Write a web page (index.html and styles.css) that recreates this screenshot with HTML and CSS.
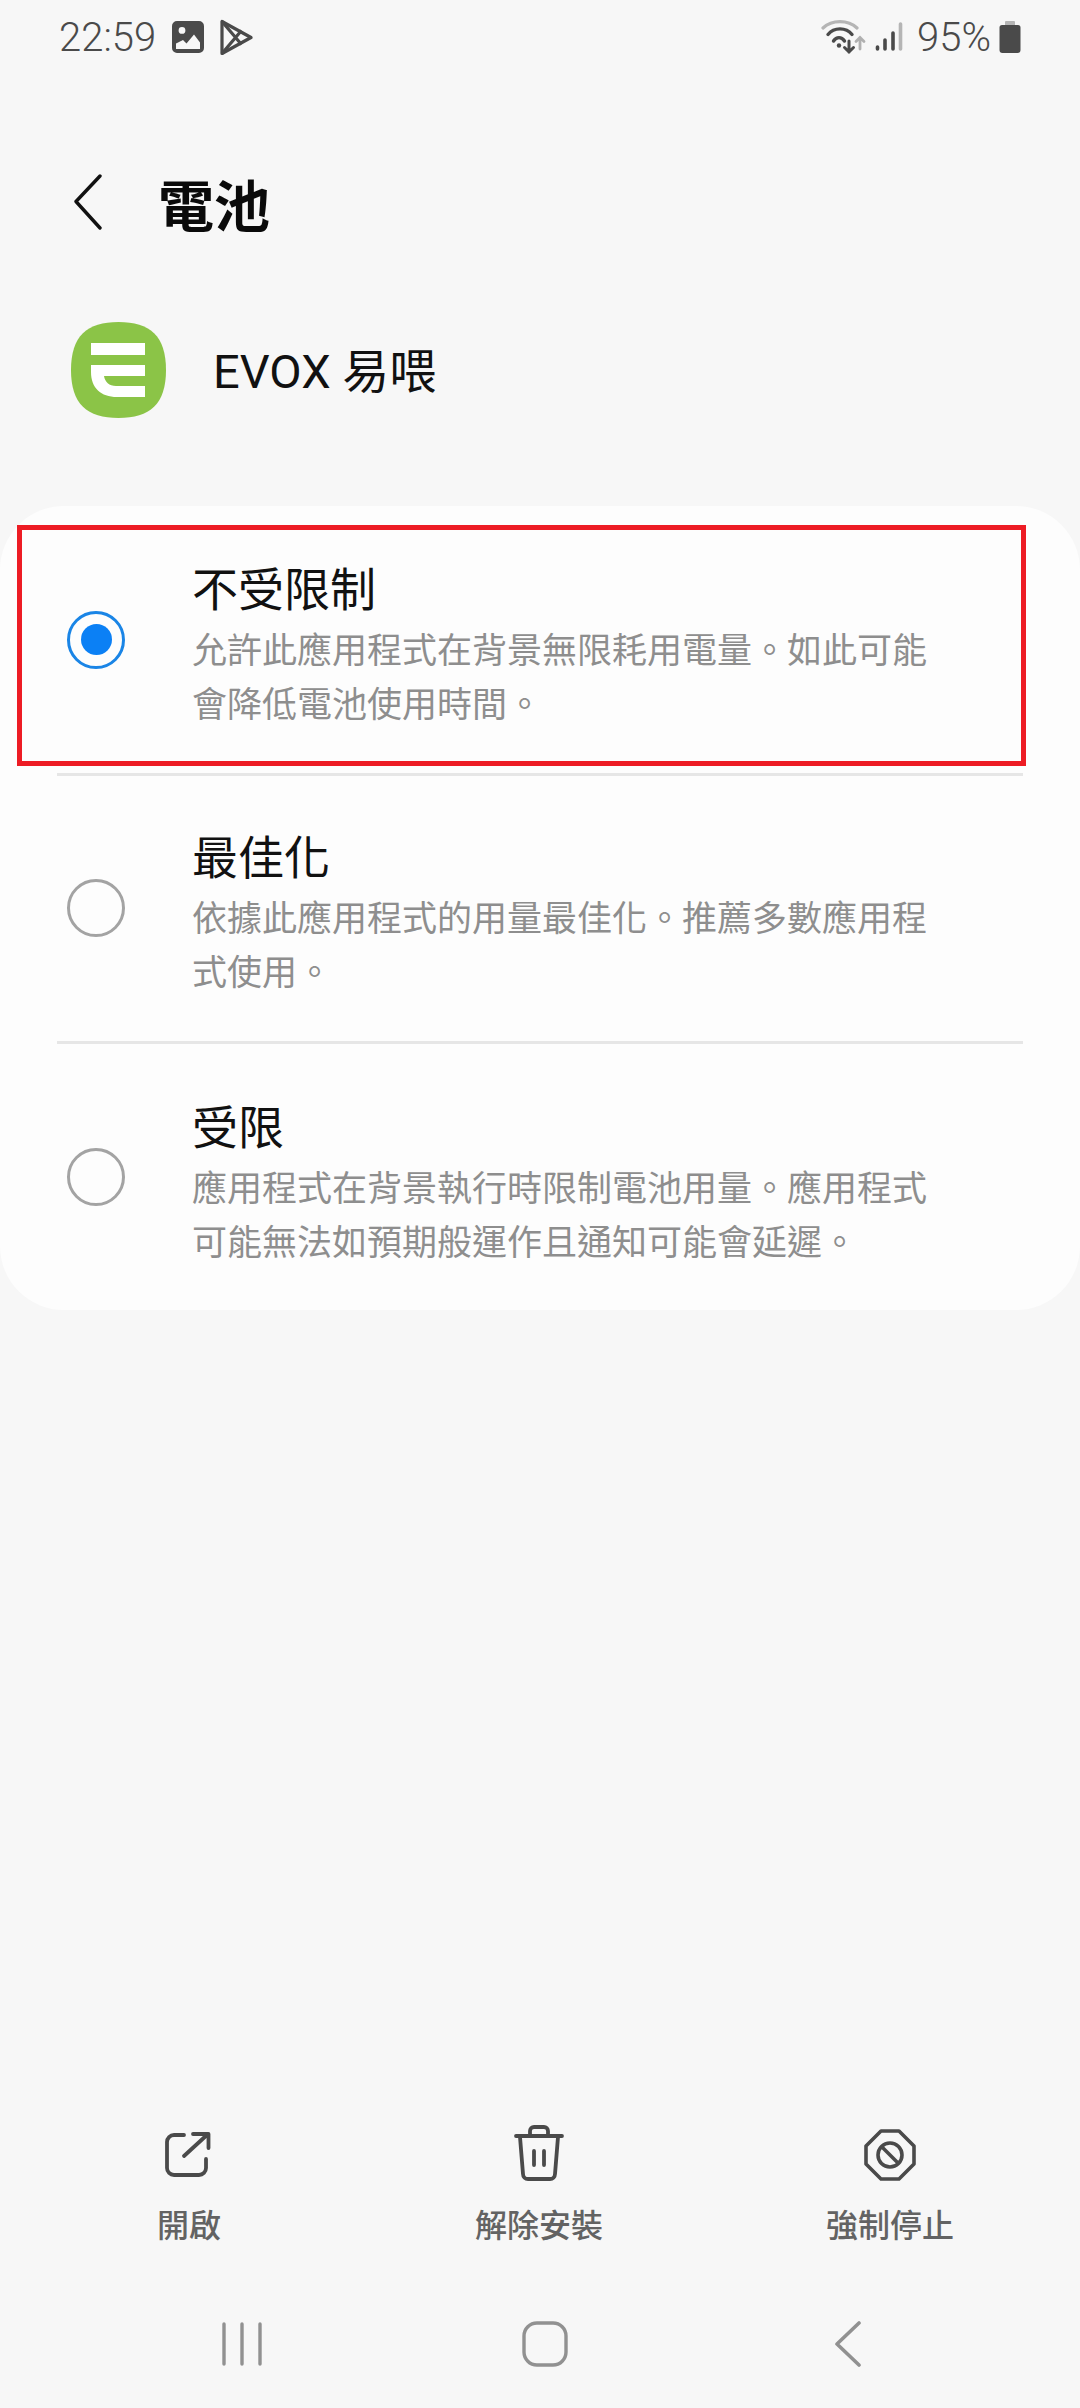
FILE: index.html
```html
<!DOCTYPE html>
<html lang="zh-Hant">
<head>
    <meta charset="UTF-8">
    <meta name="viewport" content="width=device-width, initial-scale=1.0">
    <title>電池</title>
    <link rel="stylesheet" href="styles.css">
</head>
<body>
    <div class="screen">
        <div class="status-bar">
            <div class="status-left">
                <span class="status-time">22:59</span>
                <svg class="icon-gallery" width="32" height="32" viewBox="0 0 32 32">
                    <path fill="#4a4a4a" fill-rule="evenodd" d="M5 0h22a5 5 0 0 1 5 5v22a5 5 0 0 1-5 5H5a5 5 0 0 1-5-5V5a5 5 0 0 1 5-5zM10 6a3.400 3.400 0 1 0 0 6.800a3.400 3.400 0 0 0 0-6.800zM4 22.500V28h24v-6.500l-6-8-7.500 9-3.500-3.500z"/>
                </svg>
                <svg class="icon-play" width="33" height="37" viewBox="0 0 33 37" fill="none" stroke="#4a4a4a" stroke-width="3.200" stroke-linejoin="round">
                    <path d="M2 2.500v32l29-16z"/>
                    <path d="M2 2.500l19.500 23M2 34.500l19.500-23"/>
                </svg>
            </div>
            <div class="status-right">
                <svg class="icon-wifi" width="46" height="36" viewBox="0 0 46 36" fill="none" stroke-linecap="round">
                    <path d="M2 9C11 0.500 27 0.500 36 9" stroke="#b5b5b5" stroke-width="3.200"/>
                    <path d="M7 15.500C13 8 25 8 31 15.500" stroke="#4a4a4a" stroke-width="3.400"/>
                    <path d="M12.500 22C15.500 17.500 20.500 17.500 23.500 22" stroke="#4a4a4a" stroke-width="3.400"/>
                    <circle cx="18" cy="26.500" r="2.200" fill="#4a4a4a"/>
                    <path d="M28 22v11M23.500 28.500l4.500 4.500 4.500-4.500" stroke="#4a4a4a" stroke-width="3"/>
                    <path d="M39 30V18.500M35 22.500l4-4 4 4" stroke="#b0b0b0" stroke-width="2.800"/>
                </svg>
                <svg class="icon-signal" width="28" height="30" viewBox="0 0 28 30" fill="none" stroke-linecap="round" stroke-width="3.600">
                    <path d="M2.500 27v-2M10 27V18M18 27V11" stroke="#4a4a4a"/>
                    <path d="M25.500 27V2" stroke="#b5b5b5"/>
                </svg>
                <span class="status-battery">95%</span>
                <svg class="icon-battery" width="22" height="32" viewBox="0 0 22 32">
                    <path fill="#b5b5b5" d="M7 0h8a1 1 0 0 1 1 1v3H6V1a1 1 0 0 1 1-1z"/>
                    <path fill="#4a4a4a" d="M3 4h16a2.500 2.500 0 0 1 2.500 2.500V29a3 3 0 0 1-3 3h-15a3 3 0 0 1-3-3V6.500A2.500 2.500 0 0 1 3 4z"/>
                </svg>
            </div>
        </div>

        <div class="title-bar">
            <svg class="icon-back" width="28" height="56" viewBox="0 0 28 56" fill="none" stroke="#111" stroke-width="3.400" stroke-linecap="round" stroke-linejoin="round">
                <path d="M26 2L2 27.500 26 54"/>
            </svg>
            <h1>電池</h1>
        </div>

        <div class="app-row">
            <svg class="app-logo" width="95" height="96" viewBox="0 0 95 96">
                <path fill="#8bc447" d="M47.500 0C79 0 95 14 95 48S79 96 47.500 96 0 82 0 48 16 0 47.500 0z"/>
                <path fill="#fff" d="M20 21h54v12H20zM20 43h54v11H33c1 6 5 10 12 10h29v11H46C30 75 20 66 20 50z"/>
            </svg>
            <span class="app-name">EVOX 易喂</span>
        </div>

        <div class="card">
            <div class="highlight"></div>
            <div class="option">
                <span class="radio radio-on"></span>
                <div class="option-text">
                    <div class="option-title">不受限制</div>
                    <div class="option-desc">允許此應用程式在背景無限耗用電量。如此可能<br>會降低電池使用時間。</div>
                </div>
            </div>
            <div class="option">
                <span class="radio"></span>
                <div class="option-text">
                    <div class="option-title">最佳化</div>
                    <div class="option-desc">依據此應用程式的用量最佳化。推薦多數應用程<br>式使用。</div>
                </div>
            </div>
            <div class="option">
                <span class="radio"></span>
                <div class="option-text">
                    <div class="option-title">受限</div>
                    <div class="option-desc">應用程式在背景執行時限制電池用量。應用程式<br>可能無法如預期般運作且通知可能會延遲。</div>
                </div>
            </div>
        </div>

        <div class="actions">
            <div class="action">
                <svg width="50" height="50" viewBox="0 0 50 50" fill="none" stroke="#4a4a4a" stroke-width="3.800" stroke-linecap="round" stroke-linejoin="round">
                    <path d="M20 4H10a7 7 0 0 0-7 7v26a7 7 0 0 0 7 7h25a7 7 0 0 0 7-7v-9"/>
                    <path d="M20 25L44 3M29 3h15.500v14"/>
                </svg>
                <span>開啟</span>
            </div>
            <div class="action">
                <svg width="50" height="56" viewBox="0 0 50 56" fill="none" stroke="#4a4a4a" stroke-width="3.800" stroke-linecap="round" stroke-linejoin="round">
                    <path d="M2 11h46"/>
                    <path d="M16 10V6a4 4 0 0 1 4-4h10a4 4 0 0 1 4 4v4"/>
                    <path d="M6 12l3 37a5 5 0 0 0 5 5h22a5 5 0 0 0 5-5l3-37"/>
                    <path d="M20 26v14M30 26v14"/>
                </svg>
                <span>解除安裝</span>
            </div>
            <div class="action">
                <svg width="52" height="52" viewBox="0 0 52 52" fill="none" stroke="#4a4a4a" stroke-width="3.600" stroke-linejoin="round">
                    <path d="M17 2h18l15 15v18L35 50H17L2 35V17z"/>
                    <circle cx="26" cy="26" r="12"/>
                    <path d="M17.500 17.500l17 17"/>
                </svg>
                <span>強制停止</span>
            </div>
        </div>

        <div class="nav-bar">
            <svg width="40" height="44" viewBox="0 0 40 44" fill="none" stroke="#919191" stroke-width="3.400" stroke-linecap="round">
                <path d="M2 2v40M20 2v40M38 2v40"/>
            </svg>
            <svg width="46" height="46" viewBox="0 0 46 46" fill="none" stroke="#919191" stroke-width="3.400">
                <rect x="2" y="2" width="42" height="42" rx="13"/>
            </svg>
            <svg width="28" height="46" viewBox="0 0 28 46" fill="none" stroke="#919191" stroke-width="3.600" stroke-linecap="round" stroke-linejoin="round">
                <path d="M25 2L3 23l22 21"/>
            </svg>
        </div>
    </div>
</body>
</html>
```

FILE: styles.css
```css
* {
    box-sizing: border-box;
    margin: 0;
    padding: 0;
}

body {
    background-color: #f7f7f7;
    font-family: Roboto, "Noto Sans CJK TC", sans-serif;
}

.screen {
    display: flex;
    flex-direction: column;
    width: 1080px;
    height: 2408px;
    overflow: hidden;
}

.status-bar {
    display: flex;
    justify-content: space-between;
    align-items: center;
    height: 74px;
    padding: 0 59px 0 59px;
    color: #4a4a4a;
    font-size: 40px;
}

.status-left,
.status-right {
    display: flex;
    align-items: center;
}

.status-time {
    font-weight: 300;
    margin-right: 16px;
}

.icon-gallery {
    margin-right: 16px;
}

.icon-wifi {
    margin-right: 8px;
}

.icon-signal {
    margin-right: 14px;
}

.status-battery {
    font-weight: 300;
    margin-right: 8px;
}

.title-bar {
    display: flex;
    align-items: center;
    height: 120px;
    margin-top: 68px;
    padding-left: 74px;
}

.title-bar h1 {
    font-size: 56px;
    font-weight: 700;
    color: #0a0a0a;
    margin-left: 56px;
}

.app-row {
    display: flex;
    align-items: center;
    height: 96px;
    margin-top: 60px;
    padding-left: 71px;
}

.app-name {
    font-size: 47px;
    color: #111;
    margin-left: 47px;
    margin-bottom: 6px;
}

.card {
    position: relative;
    height: 804px;
    margin-top: 88px;
    padding-top: 2px;
    background-color: #fdfdfd;
    border-radius: 64px;
}

/* cadre rouge posé sur la première option */
.highlight {
    position: absolute;
    left: 17px;
    top: 19px;
    width: 1009px;
    height: 241px;
    border: 5px solid #ed1c24;
}

.option {
    display: flex;
    align-items: center;
    height: 268px;
    margin: 0 57px;
    border-bottom: 3px solid #e6e6e6;
}

.option:last-child {
    border-bottom: none;
}

.radio {
    flex-shrink: 0;
    display: flex;
    justify-content: center;
    align-items: center;
    width: 58px;
    height: 58px;
    margin-left: 10px;
    margin-bottom: 2px;
    border: 3px solid #a3a3a3;
    border-radius: 50%;
}

.radio-on {
    border-color: #1a85e6;
}

.radio-on::after {
    content: "";
    width: 31px;
    height: 31px;
    border-radius: 50%;
    background-color: #0b80f5;
}

.option-text {
    margin-left: 67px;
    padding-top: 12px;
}

.option-title {
    font-size: 46px;
    line-height: 60px;
    color: #111;
}

.option-desc {
    margin-top: 5px;
    font-size: 35px;
    line-height: 54px;
    color: #8e8e8e;
}

.actions {
    display: grid;
    grid-template-columns: 378px 322px 380px;
    margin-top: auto;
}

.action {
    display: flex;
    flex-direction: column;
    align-items: center;
    justify-content: flex-end;
    color: #636363;
    font-size: 32px;
    font-weight: 500;
    line-height: 44px;
}

.action svg {
    margin-bottom: 23px;
}

.nav-bar {
    display: grid;
    grid-template-columns: repeat(3, 303px);
    justify-items: center;
    align-items: center;
    height: 46px;
    margin-top: 73px;
    margin-bottom: 41px;
    padding-left: 90px;
}
```
